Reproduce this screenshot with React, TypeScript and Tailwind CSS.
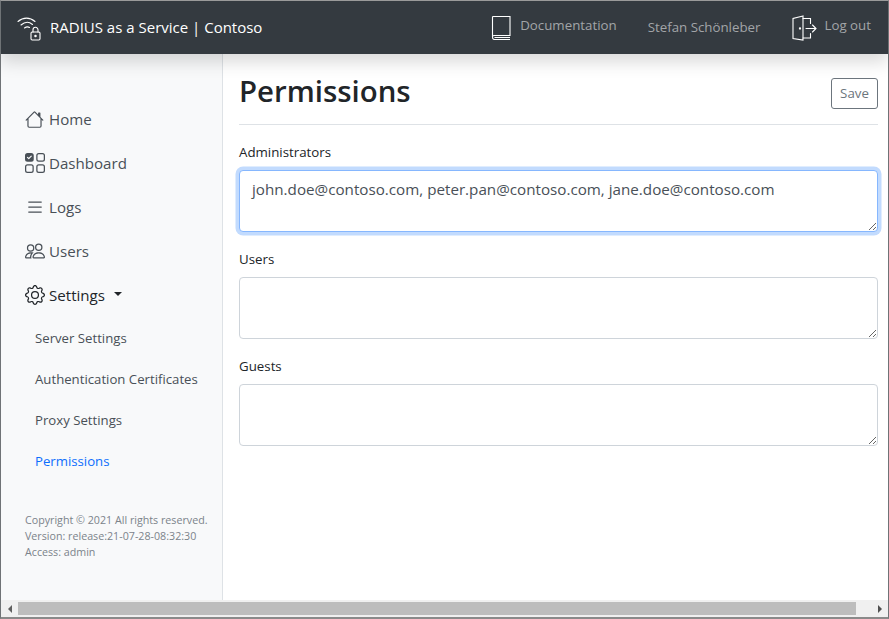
import React from "react";
import { BsHouse, BsUiChecksGrid, BsList, BsPeople, BsGear } from "react-icons/bs";

const font = "font-['Open_Sans','Noto_Sans',sans-serif]";

function WifiLock() {
  return (
    <svg width="26" height="26" viewBox="0 0 26 26" fill="none" stroke="#fff" strokeWidth="1.1" strokeLinecap="round">
      <path d="M1 6.5C6 2 13 2 18 6.5" />
      <path d="M4 10C8 6.5 12 6.5 15.5 9.5" />
      <path d="M7.5 13C9.5 11.5 11 11.5 12.5 12.5" />
      <rect x="14" y="17" width="9" height="8" rx="1.2" />
      <path d="M16 17v-2.2a2.5 2.5 0 0 1 5 0V17" />
      <circle cx="18.5" cy="21" r="0.7" fill="#fff" />
    </svg>
  );
}

function BookIcon() {
  return (
    <svg width="20" height="26" viewBox="0 0 20 26" fill="none" stroke="#fff" strokeWidth="1.1">
      <path d="M2 1.5H19V20.5H3A1.5 1.5 0 0 0 1.5 22V2Z" />
      <path d="M1.5 22A2.4 2.4 0 0 0 3 24.5H19M3.5 22.5H19" />
    </svg>
  );
}

function DoorIcon() {
  return (
    <svg width="26" height="26" viewBox="0 0 26 26" fill="none" stroke="#fff" strokeWidth="1.1" strokeLinecap="round">
      <path d="M12 1L2 3.5V23.5L12 25V1Z" />
      <path d="M12 3.5H19.5V8.5M12 23H19.5V18.5" />
      <path d="M15 13.5H25M21.5 10L25 13.5L21.5 17" />
      <circle cx="9" cy="13.5" r="0.6" fill="#fff" />
    </svg>
  );
}

function NavItem({ icon, label, dark, caret }: { icon: React.ReactNode; label: string; dark?: boolean; caret?: boolean }) {
  return (
    <a className={`flex h-[44px] items-center pl-[23px] text-[15.1px] ${dark ? "text-[#212529]" : "text-[#495057]"}`}>
      <span className="flex w-[21px] justify-center">{icon}</span>
      <span className="ml-[4px]">{label}</span>
      {caret && <span className="ml-[9px] mb-[3px] h-0 w-0 border-x-[4.8px] border-t-[4.8px] border-x-transparent border-t-[#212529]" />}
    </a>
  );
}

function SubItem({ label, active }: { label: string; active?: boolean }) {
  return <a className={`flex h-[41px] items-center pl-[34px] text-[13.2px] ${active ? "text-[#0d6efd]" : "text-[#495057]"}`}>{label}</a>;
}

function Field({ label, value, focus }: { label: string; value?: string; focus?: boolean }) {
  return (
    <div className="mb-[17px]">
      <label className="mb-[7px] block h-[21px] text-[13.3px] leading-[21px] text-[#212529]">{label}</label>
      <textarea
        readOnly
        value={value ?? ""}
        className={`block h-[62px] w-full resize-y rounded-[4px] border bg-white px-[12px] py-[6px] text-[15.2px] leading-[24px] text-[#495057] outline-none ${font} ${focus ? "border-[#86b7fe] shadow-[0_0_0_3.5px_rgba(13,110,253,0.25)]" : "border-[#ced4da]"}`}
      />
    </div>
  );
}

export default function App() {
  return (
    <div className={`flex h-[619px] w-[889px] flex-col overflow-hidden border-x border-t border-b-2 border-x-[#6f7376] border-t-[#9a9a9a] border-b-[#8a8a8a] bg-white ${font}`}>
      <header className="relative z-10 flex h-[53px] shrink-0 items-center bg-[#343a40] pl-[16px] pr-[17px] shadow-[0_8px_16px_rgba(0,0,0,0.15)]">
        <WifiLock />
        <span className="ml-[7px] text-[15px] text-white">RADIUS as a Service | Contoso</span>
        <div className="ml-auto flex items-center text-[13.3px] text-[#a2a5a8]">
          <span className="flex items-center"><BookIcon /><span className="mb-[3px] ml-[9px]">Documentation</span></span>
          <span className="ml-[31px] mt-[1px]">Stefan Schönleber</span>
          <span className="ml-[31px] flex items-center"><DoorIcon /><span className="mb-[3px] ml-[7px]">Log out</span></span>
        </div>
      </header>
      <div className="flex min-h-0 flex-1">
        <aside className="flex w-[222px] shrink-0 flex-col border-r border-[#dee2e6] bg-[#f8f9fa] pt-[43px]">
          <nav className="flex flex-col">
            <NavItem icon={<BsHouse size={19} />} label="Home" />
            <NavItem icon={<BsUiChecksGrid size={20} />} label="Dashboard" />
            <NavItem icon={<BsList size={20} />} label="Logs" />
            <NavItem icon={<BsPeople size={20} />} label="Users" />
            <NavItem icon={<BsGear size={20} />} label="Settings" dark caret />
            <div className="flex flex-col pt-[1px]">
              <SubItem label="Server Settings" />
              <SubItem label="Authentication Certificates" />
              <SubItem label="Proxy Settings" />
              <SubItem label="Permissions" active />
            </div>
          </nav>
          <div className="mt-[30px] pl-[24px] text-[10.7px] leading-[16px] text-[#7b838a]">
            <div>Copyright © 2021 All rights reserved.</div>
            <div>Version: release:21-07-28-08:32:30</div>
            <div>Access: admin</div>
          </div>
        </aside>
        <main className="min-w-0 flex-1 pl-[16px] pr-[10px]">
          <div className="mb-[17px] flex h-[71px] items-start justify-between border-b border-[#dee2e6]">
            <h1 className="mt-[18px] text-[29.4px] font-semibold leading-[38px] text-[#212529]">Permissions</h1>
            <button className="mt-[24px] h-[31px] w-[47px] rounded-[3px] border border-[#6c757d] text-[13.3px] text-[#6c757d]">Save</button>
          </div>
          <Field label="Administrators" value="john.doe@contoso.com, peter.pan@contoso.com, jane.doe@contoso.com" focus />
          <Field label="Users" />
          <Field label="Guests" />
        </main>
      </div>
      <div className="flex h-[17px] shrink-0 items-center bg-[#f0f0f0]">
        <div className="flex w-[17px] justify-center"><span className="h-0 w-0 border-y-[4px] border-r-[4px] border-y-transparent border-r-[#606060]" /></div>
        <div className="h-[13px] w-[838px] bg-[#bdbdbd]" />
        <div className="ml-auto flex w-[17px] justify-center"><span className="h-0 w-0 border-y-[4px] border-l-[4px] border-y-transparent border-l-[#505050]" /></div>
      </div>
    </div>
  );
}
